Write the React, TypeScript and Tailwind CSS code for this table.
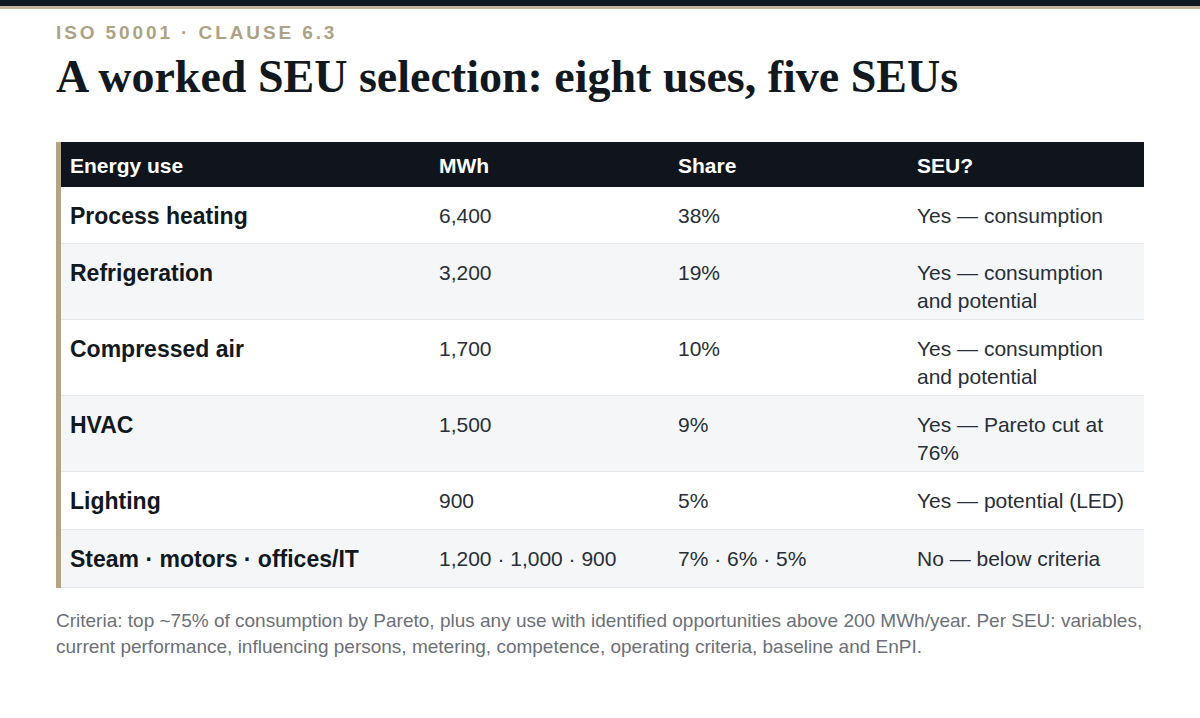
import React from "react"

type Row = {
  use: string
  mwh: string
  share: string
  seu: string
  shaded?: boolean
}

const rows: Row[] = [
  { use: "Process heating", mwh: "6,400", share: "38%", seu: "Yes — consumption" },
  { use: "Refrigeration", mwh: "3,200", share: "19%", seu: "Yes — consumption and potential", shaded: true },
  { use: "Compressed air", mwh: "1,700", share: "10%", seu: "Yes — consumption and potential" },
  { use: "HVAC", mwh: "1,500", share: "9%", seu: "Yes — Pareto cut at 76%", shaded: true },
  { use: "Lighting", mwh: "900", share: "5%", seu: "Yes — potential (LED)" },
  { use: "Steam · motors · offices/IT", mwh: "1,200 · 1,000 · 900", share: "7% · 6% · 5%", seu: "No — below criteria", shaded: true },
]

const sans = "font-['Liberation_Sans',Arial,sans-serif]"

export default function App() {
  return (
    <div className={`min-h-[718px] w-full bg-white ${sans}`}>
      {/* top rule */}
      <div className="h-[6px] bg-[#111720]" />
      <div className="h-[3px] bg-[#c2b59a]" />

      <div className="px-[56px] pt-[12px]">
        <div className="text-[19px] font-bold leading-[24px] tracking-[2.9px] text-[#aca385]">
          ISO 50001 · CLAUSE 6.3
        </div>
        <h1 className="mt-[4px] font-['Liberation_Serif','Times_New_Roman',serif] text-[46px] font-bold leading-[56px] text-[#111820]">
          A worked SEU selection: eight uses, five SEUs
        </h1>

        {/* table */}
        <div className="mt-[37px] border-l-[5px] border-[#b3a584]">
          <div className="grid grid-cols-[369px_239px_239px_1fr] bg-[#10151d] text-[21px] font-bold leading-[28px] text-white">
            <div className="pt-[10px] pb-[7px] pl-[9px]">Energy use</div>
            <div className="pt-[10px] pb-[7px] pl-[9px]">MWh</div>
            <div className="pt-[10px] pb-[7px] pl-[9px]">Share</div>
            <div className="pt-[10px] pb-[7px] pl-[9px]">SEU?</div>
          </div>
          {rows.map((r, i) => (
            <div
              key={r.use}
              className={`grid grid-cols-[369px_239px_239px_1fr] items-start border-b border-[#e3e6ea] text-[21px] leading-[28px] ${
                r.shaded ? "bg-[#f4f6f8]" : "bg-white"
              }`}
            >
              <div
                className={`pt-[15px] pl-[9px] text-[23px] font-bold text-[#111820] ${
                  i >= 4 ? "pb-[14px]" : "pb-[13px]"
                }`}
              >
                {r.use}
              </div>
              <div className="pt-[15px] pb-[4px] pl-[9px] text-[#272e38]">{r.mwh}</div>
              <div className="pt-[15px] pb-[4px] pl-[9px] text-[#272e38]">{r.share}</div>
              <div className="pt-[15px] pb-[4px] pl-[9px] pr-[9px] text-[#272e38]">{r.seu}</div>
            </div>
          ))}
        </div>

        <p className="mt-[20px] max-w-[1092px] text-[19px] leading-[26px] text-[#6b7079]">
          Criteria: top ~75% of consumption by Pareto, plus any use with identified opportunities above 200 MWh/year. Per SEU: variables, current performance, influencing persons, metering, competence, operating criteria, baseline and EnPI.
        </p>
      </div>
    </div>
  )
}
